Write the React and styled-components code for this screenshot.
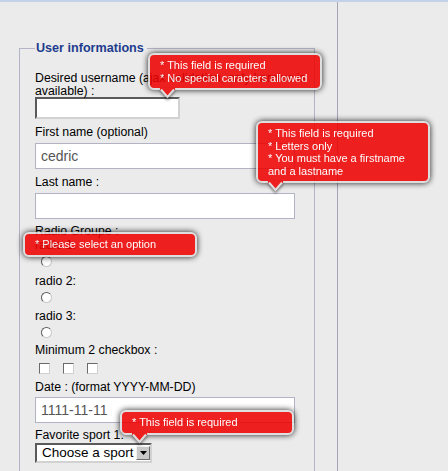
import React from "react";
import styled, { createGlobalStyle } from "styled-components";

const GlobalStyle = createGlobalStyle`
  html, body {
    margin: 0;
    padding: 0;
    background: #ebebeb;
  }
  body {
    font-family: "Liberation Sans", Arial, sans-serif;
  }
`;

const Page = styled.div`
  position: relative;
  width: 448px;
  height: 471px;
  overflow: hidden;
  display: flex;
  flex-direction: column;
  background: #ebebeb;
`;

const TopBand = styled.div`
  height: 2px;
  background: #c3d2ea;
  flex: none;
`;

const Main = styled.div`
  flex: 1;
  display: flex;
`;

const Column = styled.div`
  width: 338px;
  box-sizing: border-box;
  border-right: 1px solid #a4a4b6;
`;

const Fieldset = styled.fieldset`
  margin: 38px 0 0 19px;
  width: 296px;
  box-sizing: border-box;
  border: 1px solid #b4b4c8;
  padding: 16px 15px 20px;
  min-inline-size: 0;
`;

const Legend = styled.legend`
  padding: 0 3px 0 1px;
  font-size: 12.6px;
  line-height: 16px;
  font-weight: bold;
  color: #1d3c8e;
`;

const Label = styled.label`
  display: block;
  margin-top: ${(p) => p.$gap || 0}px;
  font-size: 12.3px;
  line-height: 13px;
  color: #000;
`;

const NoWrap = styled.span`
  white-space: nowrap;
`;

const UserInput = styled.input`
  display: block;
  margin: -1px 0 0;
  width: 145px;
  height: 22px;
  box-sizing: border-box;
  border-style: solid;
  border-width: 2px;
  border-color: #5a5a5a #d2d2d2 #d2d2d2 #5a5a5a;
  background: #fff;
  outline: none;
`;

const TextField = styled.input`
  display: block;
  margin: ${(p) => p.$gap || 0}px 0 0;
  width: 260px;
  height: 26px;
  box-sizing: border-box;
  border: 1px solid #b3b3c6;
  background: #fff;
  padding: 0 5px;
  font-family: "Liberation Sans", Arial, sans-serif;
  font-size: 14px;
  color: #555;
  outline: none;
`;

const Radio = styled.input`
  appearance: none;
  display: block;
  margin: 4px 0 0 6px;
  width: 11px;
  height: 11px;
  box-sizing: border-box;
  border-radius: 50%;
  border: 1.5px solid;
  border-color: #5c5c5c #c8c8c8 #c8c8c8 #5c5c5c;
  background: #fff;
`;

const CheckRow = styled.div`
  display: flex;
  gap: 13px;
  margin-top: 6px;
  padding-left: 4px;
`;

const Check = styled.input`
  appearance: none;
  margin: 0;
  width: 11px;
  height: 11px;
  box-sizing: border-box;
  border: 1px solid;
  border-color: #6a6a6a #d0d0d0 #d0d0d0 #6a6a6a;
  background: #fff;
`;

const Select = styled.div`
  margin-top: 1px;
  width: 117px;
  height: 20px;
  box-sizing: border-box;
  display: flex;
  align-items: center;
  border-style: solid;
  border-width: 2px;
  border-color: #5a5a5a #d2d2d2 #d2d2d2 #5a5a5a;
  background: #fff;
`;

const SelectText = styled.span`
  flex: 1;
  padding-left: 5px;
  font-size: 13.5px;
  line-height: 16px;
  color: #000;
  white-space: nowrap;
  overflow: hidden;
`;

const SelectButton = styled.span`
  width: 14px;
  height: 14px;
  box-sizing: border-box;
  display: flex;
  align-items: center;
  justify-content: center;
  background: #c9c9c9;
  border: 1px solid;
  border-color: #f2f2f2 #6a6a6a #6a6a6a #f2f2f2;
  margin-right: 0;
`;

const Tip = styled.div`
  position: absolute;
  left: ${(p) => p.$x}px;
  top: ${(p) => p.$y}px;
  opacity: 0.87;
  z-index: 10;
`;

const TipBody = styled.div`
  width: 150px;
  padding: 4px 10px;
  background: #ee0101;
  color: #fff;
  border: 2px solid #ddd;
  border-radius: 6px;
  box-shadow: 0 0 6px #000;
  font-size: 11px;
  line-height: 12.5px;
`;

const TipArrow = styled.svg`
  position: absolute;
  left: 12px;
  top: calc(100% - 2px);
  filter: drop-shadow(0 2px 1.5px rgba(0, 0, 0, 0.55));
`;

const ErrorTip = ({ x, y, arrow = true, children }) => (
  <Tip $x={x} $y={y}>
    <TipBody>{children}</TipBody>
    {arrow && (
      <TipArrow width="15" height="11" viewBox="0 0 15 11">
        <path d="M0 0H15V1.5L7.5 10L0 1.5Z" fill="#ee0101" />
        <polyline
          points="1,1.5 7.5,9 14,1.5"
          fill="none"
          stroke="#dddddd"
          strokeWidth="2"
        />
      </TipArrow>
    )}
  </Tip>
);

export default function App() {
  return (
    <Page>
      <GlobalStyle />
      <TopBand />
      <Main>
        <Column>
          <Fieldset>
            <Legend>User informations</Legend>
            <Label>
              <NoWrap>Desired username (ajax validation, only karnius is</NoWrap>
              <br />
              available) :
            </Label>
            <UserInput type="text" />

            <Label $gap={7}>First name (optional)</Label>
            <TextField $gap={4} type="text" defaultValue="cedric" />

            <Label $gap={7}>Last name :</Label>
            <TextField $gap={4} type="text" />

            <Label $gap={6}>Radio Groupe :</Label>
            <Label $gap={1}>radio 1:</Label>
            <Radio type="radio" name="group" />
            <Label $gap={8}>radio 2:</Label>
            <Radio type="radio" name="group" />
            <Label $gap={7}>radio 3:</Label>
            <Radio type="radio" name="group" />

            <Label $gap={6}>Minimum 2 checkbox :</Label>
            <CheckRow>
              <Check type="checkbox" />
              <Check type="checkbox" />
              <Check type="checkbox" />
            </CheckRow>

            <Label $gap={7}>Date : (format YYYY-MM-DD)</Label>
            <TextField $gap={3} type="text" defaultValue="1111-11-11" />

            <Label $gap={6}>Favorite sport 1:</Label>
            <Select>
              <SelectText>Choose a sport</SelectText>
              <SelectButton>
                <svg width="7" height="4" viewBox="0 0 7 4">
                  <path d="M0 0H7L3.5 4Z" fill="#000" />
                </svg>
              </SelectButton>
            </Select>
          </Fieldset>
        </Column>
      </Main>

      <ErrorTip x={148} y={53}>
        * This field is required
        <br />* No special caracters allowed
      </ErrorTip>
      <ErrorTip x={256} y={121}>
        * This field is required
        <br />* Letters only
        <br />* You must have a firstname and a lastname
      </ErrorTip>
      <ErrorTip x={23} y={232} arrow={false}>
        * Please select an option
      </ErrorTip>
      <ErrorTip x={120} y={410}>
        * This field is required
      </ErrorTip>
    </Page>
  );
}
